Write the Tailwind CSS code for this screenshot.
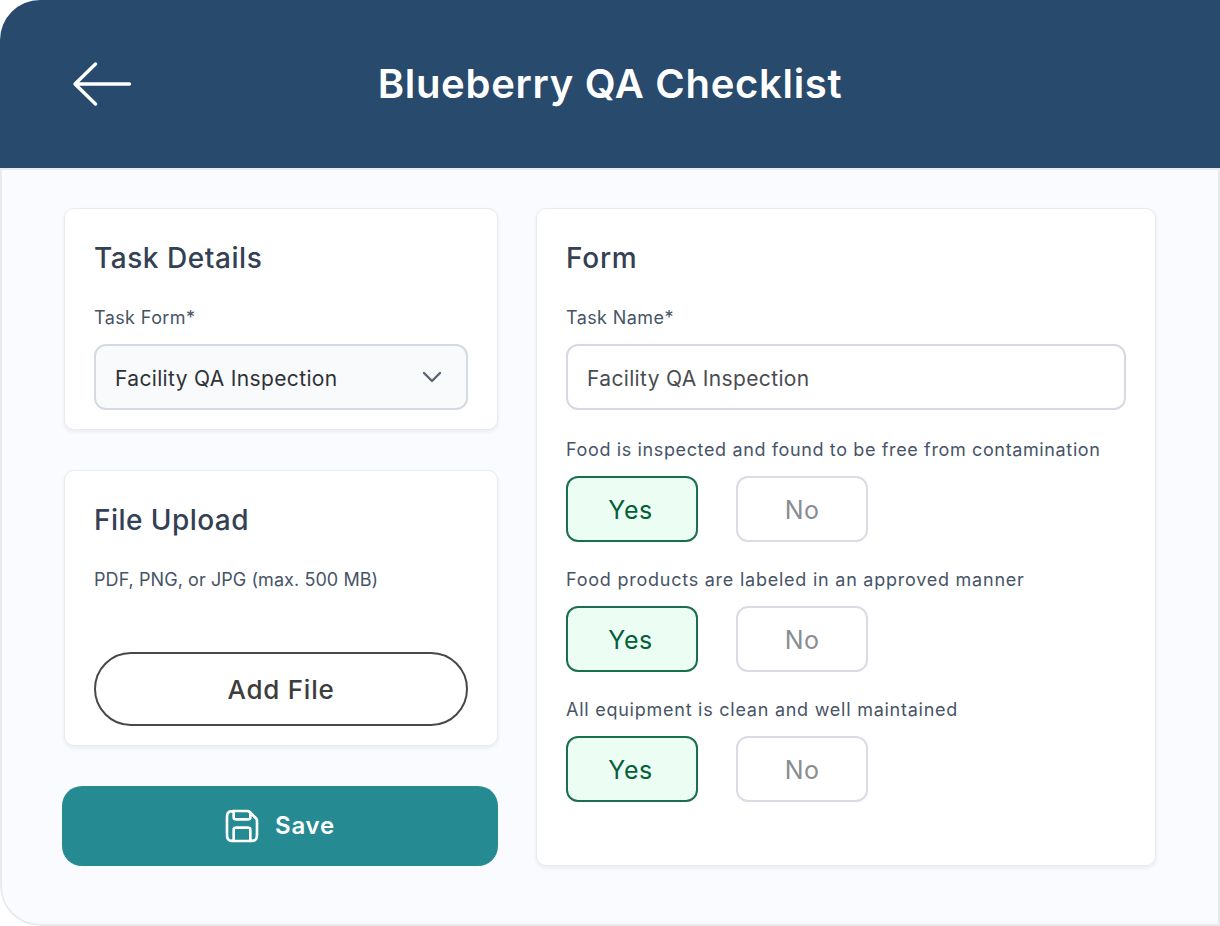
<!DOCTYPE html>
<html><head><meta charset="utf-8">
<script src="https://cdn.jsdelivr.net/npm/@tailwindcss/browser@4"></script>
</head>
<body class="w-[1220px] h-[926px] bg-white overflow-hidden font-['Inter',sans-serif]">
<div class="w-[1220px] h-[926px] rounded-l-[40px] overflow-hidden flex flex-col">
  <header class="h-[168px] bg-[#284a6c] relative flex items-center justify-center shrink-0">
    <svg class="absolute left-[72px] top-[61px]" width="60" height="46" viewBox="0 0 60 46" fill="none" stroke="white" stroke-width="3.4" stroke-linecap="round" stroke-linejoin="round"><path d="M57.5 23H3M23.5 3L3 23L23.5 43"/></svg>
    <h1 class="text-[40px] leading-[60px] font-semibold text-white tracking-[0.7px]">Blueberry QA Checklist</h1>
  </header>
  <main class="flex-1 bg-[#f9fbff] border-2 border-[#e9eaee] rounded-bl-[40px] pl-[60px] pt-[38px] flex gap-[38px] items-start">
    <div class="w-[436px] flex flex-col gap-[40px]">
      <section class="ml-[2px] h-[222px] bg-white border border-[#e9ebf1] rounded-[10px] shadow-[0_2px_4px_rgba(16,24,40,0.07)] px-[29px] pt-[31px]">
        <h2 class="text-[28px] leading-[36px] font-medium text-[#344054] tracking-[0.55px]">Task Details</h2>
        <p class="mt-[30px] text-[18px] leading-[24px] text-[#475467] tracking-[0.4px]">Task Form*</p>
        <div class="mt-[14px] h-[66px] bg-[#f9fafb] border-2 border-[#d5d9e2] rounded-[12px] pl-[19px] pr-[24px] flex items-center justify-between">
          <span class="pt-[4px] text-[21px] text-[#2f3237] tracking-[0.35px]">Facility QA Inspection</span>
          <svg width="20" height="12" viewBox="0 0 20 12" fill="none" stroke="#5b6477" stroke-width="2.4" stroke-linecap="round" stroke-linejoin="round"><path d="M2 2L10 10L18 2"/></svg>
        </div>
      </section>
      <section class="ml-[2px] h-[276px] bg-white border border-[#e9ebf1] rounded-[10px] shadow-[0_2px_4px_rgba(16,24,40,0.07)] px-[29px] pt-[31px]">
        <h2 class="text-[28px] leading-[36px] font-medium text-[#344054] tracking-[0.45px]">File Upload</h2>
        <p class="mt-[30px] text-[18px] leading-[24px] text-[#475467] tracking-[0.07px]">PDF, PNG, or JPG (max. 500 MB)</p>
        <div class="mt-[60px] h-[74px] border-2 border-[#484848] rounded-full flex items-center justify-center text-[26px] font-medium text-[#3d3d3d] tracking-[0.75px]">Add File</div>
      </section>
      <button class="h-[80px] pl-[2px] bg-[#258a92] rounded-[20px] flex items-center justify-center gap-[18px] text-white text-[24px] font-semibold tracking-[0.8px]">
        <svg class="-ml-[5px] -mr-[5px]" width="40" height="40" viewBox="0 0 24 24" fill="none" stroke="white" stroke-width="1.6" stroke-linecap="round" stroke-linejoin="round"><path d="M7 3V6.4C7 6.96 7 7.24 7.109 7.454C7.205 7.642 7.358 7.795 7.546 7.891C7.76 8 8.04 8 8.6 8H15.4C15.96 8 16.24 8 16.454 7.891C16.642 7.795 16.795 7.642 16.891 7.454C17 7.24 17 6.96 17 6.4V4M17 21V14.6C17 14.04 17 13.76 16.891 13.546C16.795 13.358 16.642 13.205 16.454 13.109C16.24 13 15.96 13 15.4 13H8.6C8.04 13 7.76 13 7.546 13.109C7.358 13.205 7.205 13.358 7.109 13.546C7 13.76 7 14.04 7 14.6V21M21 9.325V16.2C21 17.88 21 18.72 20.673 19.362C20.385 19.926 19.926 20.385 19.362 20.673C18.72 21 17.88 21 16.2 21H7.8C6.12 21 5.28 21 4.638 20.673C4.074 20.385 3.615 19.926 3.327 19.362C3 18.72 3 17.88 3 16.2V7.8C3 6.12 3 5.28 3.327 4.638C3.615 4.074 4.074 3.615 4.638 3.327C5.28 3 6.12 3 7.8 3H14.675C15.164 3 15.408 3 15.639 3.055C15.843 3.104 16.038 3.185 16.217 3.295C16.418 3.418 16.591 3.591 16.937 3.937L20.063 7.063C20.409 7.409 20.582 7.582 20.705 7.783C20.815 7.962 20.896 8.157 20.945 8.361C21 8.592 21 8.836 21 9.325Z"/></svg>
        Save
      </button>
    </div>
    <section class="w-[620px] h-[658px] bg-white border border-[#e9ebf1] rounded-[10px] shadow-[0_2px_4px_rgba(16,24,40,0.07)] px-[29px] pt-[31px]">
      <h2 class="text-[28px] leading-[36px] font-medium text-[#344054] tracking-[0.75px]">Form</h2>
      <p class="mt-[30px] text-[18px] leading-[24px] text-[#475467] tracking-[0.4px]">Task Name*</p>
      <div class="mt-[14px] h-[66px] bg-white border-2 border-[#d5d9e2] rounded-[12px] px-[19px] pt-[4px] flex items-center text-[21px] text-[#4a4d52] tracking-[0.35px]">Facility QA Inspection</div>
      <p class="mt-[28px] text-[18px] leading-[24px] text-[#475467] tracking-[0.63px]">Food is inspected and found to be free from contamination</p>
      <div class="mt-[14px] flex gap-[38px]">
        <div class="w-[132px] h-[66px] bg-[#ecfdf3] border-2 border-[#1a6f4e] rounded-[12px] pt-[3px] pr-[3px] flex items-center justify-center text-[25px] text-[#05603a] tracking-[0.5px]">Yes</div>
        <div class="w-[132px] h-[66px] bg-white border-2 border-[#d9dce4] rounded-[12px] pt-[3px] flex items-center justify-center text-[25px] text-[#8a8c94] tracking-[0.3px]">No</div>
      </div>
      <p class="mt-[26px] text-[18px] leading-[24px] text-[#475467] tracking-[0.76px]">Food products are labeled in an approved manner</p>
      <div class="mt-[14px] flex gap-[38px]">
        <div class="w-[132px] h-[66px] bg-[#ecfdf3] border-2 border-[#1a6f4e] rounded-[12px] pt-[3px] pr-[3px] flex items-center justify-center text-[25px] text-[#05603a] tracking-[0.5px]">Yes</div>
        <div class="w-[132px] h-[66px] bg-white border-2 border-[#d9dce4] rounded-[12px] pt-[3px] flex items-center justify-center text-[25px] text-[#8a8c94] tracking-[0.3px]">No</div>
      </div>
      <p class="mt-[26px] text-[18px] leading-[24px] text-[#475467] tracking-[0.75px]">All equipment is clean and well maintained</p>
      <div class="mt-[14px] flex gap-[38px]">
        <div class="w-[132px] h-[66px] bg-[#ecfdf3] border-2 border-[#1a6f4e] rounded-[12px] pt-[3px] pr-[3px] flex items-center justify-center text-[25px] text-[#05603a] tracking-[0.5px]">Yes</div>
        <div class="w-[132px] h-[66px] bg-white border-2 border-[#d9dce4] rounded-[12px] pt-[3px] flex items-center justify-center text-[25px] text-[#8a8c94] tracking-[0.3px]">No</div>
      </div>
    </section>
  </main>
</div>
</body></html>
